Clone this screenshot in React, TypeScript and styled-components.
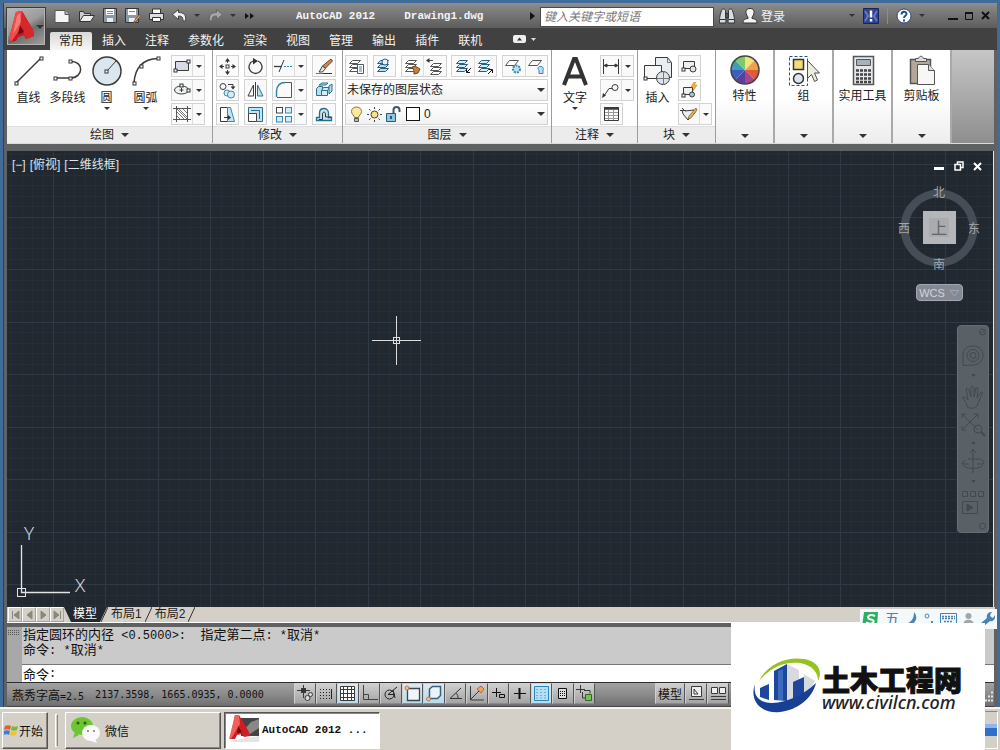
import React from "react";
import styled, { createGlobalStyle, css } from "styled-components";

const SANS = `"Liberation Sans", "Noto Sans CJK SC", sans-serif`;
const MONO = `"Liberation Mono", "Noto Sans CJK SC", monospace`;

const Global = createGlobalStyle`
  * { box-sizing: border-box; }
  body { margin: 0; background: #3f6c9b; font-family: ${SANS}; font-size: 12px; color: #222; }
  button, input, select { font: inherit; color: inherit; margin: 0; padding: 0; border: 0; background: none; border-radius: 0; outline: none; }
  button { display: inline-flex; align-items: center; justify-content: center; cursor: pointer; white-space: nowrap; }
  svg { display: block; flex: none; }
`;

/* ---------- shell ---------- */
const Desktop = styled.div`
  position: relative;
  min-height: 100vh;
  display: flex;
  flex-direction: column;
  overflow: hidden;
`;
const Frame = styled.main`
  flex: 1;
  display: flex;
  flex-direction: column;
  margin: 3px 3px 0;
  background: #5f6163;
  border-left: 1px solid #2c4258;
`;
const Body = styled.div`
  flex: 1;
  display: flex;
  flex-direction: column;
  margin: 0 3px;
`;

/* ---------- header ---------- */
const Header = styled.header`
  display: grid;
  grid-template-columns: 42px 1fr;
  height: 47px;
  background: linear-gradient(#8f8f8f 0, #7c7c7c 8px, #5d5d5d 25px, #414141 25px);
  padding-left: 2px;
`;
const AppButton = styled.button`
  width: 40px;
  height: 39px;
  margin-top: 4px;
  border: 1px solid #3c3c3c;
  box-shadow: inset 0 0 0 1px #b4b4b4;
  background: linear-gradient(150deg, #b9b9b9, #9c9c9c 45%, #6e6e6e 60%, #a2a2a2);
`;
const HeaderRows = styled.div`
  display: flex;
  flex-direction: column;
`;
const TitleBar = styled.div`
  display: flex;
  align-items: center;
  height: 25px;
  padding-left: 2px;
  padding-right: 3px;
  color: #f4f4f4;
`;
const IconButton = styled.button<{ $w: number }>`
  width: ${(p) => p.$w}px;
  height: 22px;
  flex: none;
`;
const Title = styled.h1`
  display: flex;
  gap: 29px;
  flex: none;
  width: 229px;
  margin: 0 0 0 38px;
  font: bold 11px ${MONO};
  white-space: nowrap;
`;
const Search = styled.input`
  flex: 1 1 174px;
  max-width: 174px;
  min-width: 80px;
  height: 20px;
  margin-top: 2px;
  padding-left: 3px;
  background: #fff;
  border: 1px solid #4a4a4a;
  &::placeholder { color: #777; font-style: italic; opacity: 1; }
`;
const Spacer = styled.span`
  flex: 1;
`;
const Divider = styled.span`
  width: 1px;
  height: 16px;
  background: #8d8d8d;
  margin: 0 5px 0 7px;
`;
const WindowControls = styled.div`
  display: flex;
  margin-left: 15px;
`;
const Tabs = styled.nav`
  display: flex;
  align-items: flex-end;
  gap: 1px;
  height: 22px;
  padding-left: 2px;
`;
const Tab = styled.button<{ $on?: boolean }>`
  height: 18px;
  padding: 0 9px;
  line-height: 18px;
  color: ${(p) => (p.$on ? "#222" : "#f2f2f2")};
  background: ${(p) => (p.$on ? "linear-gradient(#d9d9d9, #f6f6f6)" : "none")};
  border-radius: 2px 2px 0 0;
`;

/* ---------- ribbon ---------- */
const Ribbon = styled.section`
  display: flex;
  height: 94px;
  background: linear-gradient(#c6c6c6, #8e8e8e);
  border-bottom: 1px solid #dcdcd4;
`;
const PanelBox = styled.section`
  display: flex;
  flex-direction: column;
  border-right: 1px solid #9c9c9c;
  background: #fff;
  flex: none;
`;
const PanelBody = styled.div<{ $l: number; $r: number }>`
  flex: 1;
  display: flex;
  align-items: flex-start;
  padding: 5px ${(p) => p.$r}px 0 ${(p) => p.$l}px;
`;
const PanelTitle = styled.button`
  height: 17px;
  gap: 7px;
  background: #ececec;
  border-top: 1px solid #dedede;
  line-height: 16px;
`;
const Large = styled.button<{ $w: number }>`
  width: ${(p) => p.$w}px;
  flex: none;
  flex-direction: column;
  line-height: 18px;
  & > svg:first-child { margin-bottom: 2px; }
`;
const Rows = styled.div<{ $ml?: number }>`
  display: flex;
  flex-direction: column;
  gap: 2px;
  margin-left: ${(p) => p.$ml ?? 0}px;
`;
const ModifyGrid = styled.div`
  display: grid;
  grid-template-columns: 23px 23px 35px 24px;
  gap: 2px 5px;
`;
const Cell = styled.div<{ $w: number }>`
  display: flex;
  width: ${(p) => p.$w}px;
  height: 22px;
  border: 1px solid #d2d2d2;
  background: #fafafa;
`;
const Small = styled.button`
  flex: 1;
  height: 20px;
  & + & { border-left: 1px solid #dcdcdc; }
`;
const Drop = styled.button`
  width: 12px;
  height: 20px;
  border-left: 1px solid #dcdcdc;
`;
const LayerCol = styled.div`
  display: flex;
  flex-direction: column;
  gap: 2px;
  width: 203px;
`;
const LayerTools = styled.div`
  display: flex;
  justify-content: space-between;
`;
const Combo = styled.label`
  display: flex;
  align-items: center;
  height: 22px;
  padding: 0 2px 0 1px;
  border: 1px solid #d2d2d2;
  background: linear-gradient(#fff, #f1f1f1);
  select { flex: 1; min-width: 0; appearance: none; height: 20px; }
`;
const LayerMarks = styled.span`
  display: flex;
  align-items: center;
  gap: 2px;
  padding-left: 3px;
`;
const Swatch = styled.span`
  width: 14px;
  height: 14px;
  margin: 0 4px 0 2px;
  background: #fff;
  border: 1px solid #111;
`;
const Wide = styled.button`
  width: 59px;
  flex: none;
  flex-direction: column;
  justify-content: flex-start;
  padding: 5px 0 5px;
  line-height: 18px;
  background: linear-gradient(#fff 50%, #ededed);
  border-right: 2px solid #a9a9a9;
  & > svg:last-child { margin-top: auto; }
`;

/* ---------- drawing area ---------- */
const Canvas = styled.section`
  position: relative;
  flex: 1;
  min-height: 300px;
  margin-top: 7px;
  background: #212830;
  border-right: 1px solid #e8e4dc;
  overflow: hidden;
`;
const GridSvg = styled.svg`
  position: absolute;
  inset: 0;
  width: 100%;
  height: 100%;
`;
const ViewLabel = styled.div`
  position: absolute;
  left: 5px;
  top: 5px;
  display: flex;
  gap: 4px;
  color: #dfe2e6;
  line-height: 18px;
`;
const WinButtons = styled.div`
  position: absolute;
  right: 6px;
  top: 4px;
  display: flex;
`;
const Cursor = styled.svg`
  position: absolute;
  left: 365px;
  top: 165px;
`;
const Ucs = styled.svg`
  position: absolute;
  left: 4px;
  bottom: 6px;
`;
const CubeWrap = styled.div`
  position: absolute;
  right: 12px;
  top: 32px;
  display: flex;
  flex-direction: column;
  align-items: center;
`;
const Wcs = styled.button`
  width: 47px;
  height: 17px;
  margin-top: 9px;
  gap: 5px;
  border-radius: 4px;
  border: 1px solid #a4a7b2;
  background: #858996;
  color: #d2d4da;
  font-size: 11px;
`;
const NavBar = styled.div`
  position: absolute;
  right: 4px;
  top: 174px;
  width: 32px;
  height: 208px;
  border-radius: 4px;
  background: #5a6166;
  border: 1px solid #656c72;
`;

/* ---------- layout tabs ---------- */
const LayoutTabs = styled.div`
  display: flex;
  height: 16px;
  background: #d4d0c8;
  border-bottom: 1px solid #fff;
  padding-left: 1px;
  margin-right: -1px;
`;
const StepButton = styled.button`
  width: 14px;
  height: 15px;
  border: 1px solid #a6a39c;
  border-top-color: #fff;
  border-left-color: #fff;
`;
const SheetTab = styled.button<{ $on?: boolean }>`
  height: 15px;
  line-height: 15px;
  padding: 0 3px;
  ${(p) =>
    p.$on &&
    css`
      padding: 0 10px 0 9px;
      margin-right: -6px;
      color: #fff;
      background: #212830;
      clip-path: polygon(0 0, 100% 0, 36px 100%, 7px 100%);
    `}
`;

/* ---------- command window ---------- */
const Command = styled.section`
  display: grid;
  grid-template-columns: 15px 1fr;
  margin-top: 4px;
  border-bottom: 1px solid #2e2e2e;
  background: #a8a8a8;
`;
const Grip = styled.div`
  padding: 3px 1px;
`;
const History = styled.div`
  height: 38px;
  padding: 0 0 0 1px;
  background: #cacaca;
  border-bottom: 1px solid #777;
  color: #111;
  p { margin: 0; height: 15px; font-size: 13px; line-height: 15px; white-space: pre; }
  code { font: 12px/15px ${MONO}; }
`;
const Prompt = styled.label`
  display: flex;
  align-items: center;
  height: 17px;
  padding-left: 1px;
  background: #fff;
  font-size: 13px;
  color: #111;
  code, input { font: 12px ${MONO}; }
  input { flex: 1; }
`;

/* ---------- status bar ---------- */
const Status = styled.footer`
  display: flex;
  height: 24px;
  background: linear-gradient(#a2a2a2, #8b8b8b 50%, #6f6f6f);
  border-bottom: 1px solid #444;
`;
const Coords = styled.div`
  width: 287px;
  display: flex;
  align-items: center;
  gap: 11px;
  padding-left: 5px;
  color: #111;
  white-space: pre;
  code { font: 10px "DejaVu Sans Mono", monospace; }
`;
const Toggles = styled.div`
  display: flex;
  width: 301px;
  button { flex: 1; }
`;
const Toggle = styled.button<{ $on?: boolean; $w?: number }>`
  ${(p) => p.$w && `width: ${p.$w}px;`}
  height: 21px;
  border: 1px solid #d0d0d0;
  border-right-color: #555;
  border-bottom-color: #8a8a8a;
  background: ${(p) => (p.$on ? "linear-gradient(#dfe8ee, #b9dbe9)" : "linear-gradient(#cfcfcf, #a4a4a4)")};
  color: #111;
`;
const StatusGap = styled.span`
  width: 60px;
`;

/* ---------- taskbar ---------- */
const Taskbar = styled.footer`
  display: flex;
  align-items: center;
  gap: 3px;
  height: 43px;
  padding: 1px 2px 0;
  background: #d4d0c8;
  border-top: 2px solid #f6f5f2;
`;
const TaskButton = styled.button<{ $w: number; $on?: boolean }>`
  width: ${(p) => p.$w}px;
  height: 37px;
  justify-content: flex-start;
  gap: ${(p) => (p.$w < 60 ? 1 : 3)}px;
  padding-left: ${(p) => (p.$w < 60 ? 1 : 4)}px;
  border: 1px solid;
  border-color: ${(p) => (p.$on ? "#555 #fff #fff #555" : "#fff #555 #555 #fff")};
  box-shadow: inset ${(p) => (p.$on ? "1px 1px" : "-1px -1px")} 0 #8a877f;
  background: ${(p) => (p.$on ? "#fff" : "#d4d0c8")};
  color: #111;
  ${(p) => p.$on && `font: bold 11px ${MONO};`}
`;
const TaskDivider = styled.span`
  width: 3px;
  height: 33px;
  margin: 0 4px;
  border: 1px solid #fff;
  border-right-color: #8a877f;
`;
const Tray = styled.div`
  width: 60px;
  height: 38px;
  margin-left: auto;
  display: flex;
  align-items: center;
  justify-content: flex-end;
  border: 1px solid #fff;
  border-top-color: #8a877f;
`;

/* ---------- overlays ---------- */
const Ime = styled.div`
  position: absolute;
  right: 3px;
  bottom: 121px;
  display: flex;
  align-items: center;
  justify-content: space-between;
  width: 137px;
  height: 20px;
  padding: 0 2px;
  background: #f3f8fb;
  color: #4783b5;
  font-size: 15px;
  line-height: 18px;
`;
const Banner = styled.aside`
  position: absolute;
  right: 15px;
  bottom: 0;
  width: 254px;
  height: 127px;
  display: flex;
  align-items: flex-start;
  padding: 34px 0 0 22px;
  background: #fff;
  color: #111;
`;
const Brand = styled.div`
  margin: 8px 0 0 1px;
  strong {
    display: block;
    font: 900 28px/28px "Noto Sans CJK SC", sans-serif;
    -webkit-text-stroke: 1px #111;
    white-space: nowrap;
  }
  a {
    display: block;
    color: #222;
    text-decoration: none;
    font: italic 500 18px/18px "Noto Sans", sans-serif;
  }
`;

/* ---------- icons ---------- */
type IcoProps = { w?: number; h?: number; vb?: string; c?: string; children: React.ReactNode };
const Ico = ({ w = 16, h = w, vb, c = "#3a3a3a", children }: IcoProps) => (
  <svg width={w} height={h} viewBox={vb ?? `0 0 ${w} ${h}`} fill="none" stroke={c} aria-hidden="true">
    {children}
  </svg>
);
const Caret = ({ c = "#333", w = 8 }: { c?: string; w?: number }) => (
  <svg width={w} height={w / 2} viewBox="0 0 8 4" aria-hidden="true">
    <path d="M0 0h8L4 4z" fill={c} />
  </svg>
);
const Node = ({ x, y }: { x: number; y: number }) => (
  <rect x={x - 1.5} y={y - 1.5} width="3" height="3" fill="#fff" stroke="#333" />
);

const LogoA = () => (
  <svg width="28" height="33" viewBox="0 0 28 33" aria-hidden="true">
    <path d="M8 2l6-1 11 19 1 6-8 3-2-4-6 2-2 4-6 1-1-3z" fill="#c4161c" />
    <path d="M8 2l6-1 2 13-13 18-2-3z" fill="#ee4b4b" />
    <path d="M14 1l11 19 1 6-8 3-6-15z" fill="#d8262b" />
    <path d="M12 15l4 7-6 2z" fill="#6d0a0e" />
    <path d="M9 6l3-3 1 9-8 12z" fill="#ff8f8a" opacity=".7" />
  </svg>
);

const Layers = ({ c = "#fff" }: { c?: string }) => (
  <g fill={c}>
    <path d="M4.500 10.500h8l-3 3h-8z" />
    <path d="M4.500 6.500h8l-3 3h-8z" />
    <path d="M4.500 2.500h8l-3 3h-8z" />
  </g>
);

const I = {
  newDoc: (
    <Ico w={16} h={14} c="#555"><path d="M1 1.500h10l4 4v8H1z" fill="#f5f5f5" /><path d="M11 1.500v4h4" fill="#bbb" /></Ico>
  ),
  open: (
    <Ico w={17} h={14} c="#333"><path d="M1.500 12.500v-10h4l1 2h6v3" fill="#ccc" /><path d="M1.500 12.500l4-6h11l-4 6z" fill="#eee" /></Ico>
  ),
  save: (
    <Ico w={14} h={15} c="#333"><path d="M.5.500h13v14H.5z" fill="#8b98a5" /><path d="M3 1h8v6H3z" fill="#fff" stroke="none" /><path d="M4 3.500h6M4 5.500h6" stroke="#889" /><path d="M4 10h6v4H4z" fill="#eee" stroke="none" /></Ico>
  ),
  saveAs: (
    <Ico w={16} h={15} c="#333"><path d="M.5.500h13v14H.5z" fill="#8b98a5" /><path d="M3 1h8v6H3z" fill="#fff" stroke="none" /><path d="M4 3.500h6" stroke="#889" /><path d="M4 10h6v4H4z" fill="#eee" stroke="none" /><path d="M14.500 6.500l-5 6-1 2 2-.5 5-6z" fill="#f1b04c" stroke="#754" /></Ico>
  ),
  print: (
    <Ico w={17} h={15} c="#333"><path d="M4.500 6v-5h8v5" fill="#fff" /><path d="M1.500 5.500h14v6h-14z" fill="#ddd" /><path d="M4.500 9.500h8v4h-8z" fill="#fff" /></Ico>
  ),
  undo: (
    <Ico w={15} h={13} c="#444"><path d="M.5 5.500l6-5v3c5 0 8 2 7 8.500h-2.500c0-4-1-5-4.500-5v3.500z" fill="#f2f2f2" /></Ico>
  ),
  redo: (
    <Ico w={15} h={13} c="#666"><path d="M14.500 5.500l-6-5v3c-5 0-8 2-7 8.500H4c0-4 1-5 4.500-5v3.500z" fill="#a5a5a5" /></Ico>
  ),
  more: (
    <Ico w={9} h={6} c="none"><path d="M0 0l4 3-4 3zM5 0l4 3-4 3z" fill="#111" /></Ico>
  ),
  binoculars: (
    <Ico w={16} h={16} c="#333"><path d="M2.500 2.500c0-2 4-2 4 0l.5 12.500H.500c0-5 0-6 2-12.500zM9.500 2.500c0-2 4-2 4 0 2 6.500 2 7.500 2 12.500H9z" fill="#d8dde2" /><path d="M6.500 5.500h3v4h-3z" fill="#555" /><path d="M1 11.500h5.500M9.500 11.500H15" /></Ico>
  ),
  person: (
    <Ico w={16} h={16} c="#333"><path d="M8 .500c4 0 4 3 4 4s-1 4-2 4.500v1.500c4 .5 5 2 5 4.500H1c0-2.500 1-4 5-4.500V9C5 8.500 4 5.500 4 4.500s0-4 4-4z" fill="#f4f4f4" /></Ico>
  ),
  exchange: (
    <Ico w={16} h={16} c="#17245a"><path d="M.500.500h15v15H.500z" fill="#2f418f" /><path d="M2 3l3 5-3 5M14 3l-3 5 3 5" stroke="#6478c4" strokeWidth="2" /><path d="M8 2.500v7M8 11v2.500" stroke="#fff" strokeWidth="2.500" /></Ico>
  ),
  help: (
    <Ico w={16} h={16} c="#2a4a78"><circle cx="8" cy="8" r="7" fill="#fff" /><path d="M5.500 6.500c0-3.500 5-3.500 5-.5 0 2-2.500 1.500-2.500 4M8 11.500v2" strokeWidth="2" stroke="#264f86" /></Ico>
  ),
  line: (
    <Ico w={32}><path d="M3 28L28 3" strokeWidth="1.500" /><Node x={3.5} y={28.5} /><Node x={28.5} y={3.5} /></Ico>
  ),
  polyline: (
    <Ico w={32}><path d="M3 23h15c14 0 14-17 1-16.500" strokeWidth="1.500" /><Node x={3.5} y={23.5} /><Node x={18.5} y={23.5} /><Node x={18.5} y={6.5} /></Ico>
  ),
  circle: (
    <Ico w={32}><circle cx="16" cy="16" r="14" fill="#dce6ef" strokeWidth="1.500" /><path d="M16 16l9-10" /><Node x={15.5} y={16.5} /></Ico>
  ),
  arc: (
    <Ico w={32}><path d="M4 28C5 13 13 4 28 3.500" strokeWidth="1.500" /><Node x={4.5} y={28.5} /><Node x={11.5} y={11.5} /><Node x={28.5} y={3.5} /></Ico>
  ),
  rect: (
    <Ico w={18} h={14}><path d="M2.500 2.500h13v9h-13z" fill="#d5dce5" /><Node x={2.5} y={11.5} /><Node x={15.5} y={2.5} /></Ico>
  ),
  ellipse: (
    <Ico w={18} h={14}><ellipse cx="8.500" cy="7" rx="7" ry="4" fill="#eef2f5" /><path d="M6.500 7h4M8.500 5v4" /><Node x={15.5} y={7.5} /><Node x={8.5} y={2.5} /></Ico>
  ),
  hatch: (
    <Ico w={18} h={16}><path d="M3.500 0v16M14.500 0v16M0 2.500h18M0 13.500h18" stroke="#555" /><path d="M4 6l7 7M4 10l3 3M6 3l8 8M10 3l4 4M4 3l10 10" stroke="#777" /></Ico>
  ),
  move: (
    <Ico w={17}><path d="M8.500 2v13M2 8.500h13" strokeDasharray="3 2" /><path d="M8.500 0L6 3.500h5zM8.500 17L6 13.500h5zM0 8.500L3.500 6v5zM17 8.500L13.500 6v5z" fill="#333" stroke="none" /><rect x="7" y="7" width="3" height="3" fill="#fff" /></Ico>
  ),
  rotate: (
    <Ico w={17}><path d="M6 3a6.500 6.500 0 1 0 5 0" strokeWidth="1.300" /><path d="M6 0l5 3-5 3.500z" fill="#333" stroke="none" /></Ico>
  ),
  trim: (
    <Ico w={20} h={14}><path d="M0 7.500h8" strokeWidth="1.300" /><path d="M5 13L10 1" /><path d="M10 7.500h9" stroke="#3a86ad" strokeDasharray="2 1" /></Ico>
  ),
  erase: (
    <Ico w={18} h={17}><path d="M16 1l1.500 2-7 7-3-2z" fill="#c98a54" stroke="#6b4423" /><path d="M7.500 8l3 2.500-3 3.500H4z" fill="#e8e0d2" stroke="#444" /><path d="M1 15.500h7" stroke="#3a86ad" /><path d="M8 15.500h9" stroke="#333" /></Ico>
  ),
  copy: (
    <Ico w={17}><circle cx="4" cy="4.500" r="3" /><circle cx="8" cy="11" r="3" fill="#d5ecf5" stroke="#3a86ad" /><circle cx="12" cy="12.500" r="3.500" fill="#d5ecf5" stroke="#3a86ad" /><path d="M9 2.500h5V5" /><path d="M11.500 4.500h5L14 7.500z" fill="#333" stroke="none" /></Ico>
  ),
  mirror: (
    <Ico w={17}><path d="M8.500 0v17" /><path d="M6.500 3v11H1z" /><path d="M10.500 3v11H16z" fill="#b9dfee" stroke="#2d7498" /></Ico>
  ),
  fillet: (
    <Ico w={18}><path d="M1.500 16V10C2 5 5 1.500 10 1.500" stroke="#3a86ad" strokeWidth="1.500" /><path d="M10 1.500h6.500V16.500H2" stroke="#555" /></Ico>
  ),
  explode: (
    <Ico w={18} h={16} c="#256f93"><path d="M1.500 6.500l2-2h4v9h-6z" fill="#b9dfee" /><path d="M6.500 8.500h6v5h-6zM6.500 8.500l2-3h6l-2 3" fill="#d5ecf5" /><path d="M14 4l3-2v7l-3 3zM4 3l3-2h6l-2 2z" fill="#b9dfee" /></Ico>
  ),
  stretch: (
    <Ico w={17}><path d="M1.500 1.500h7v14h-7z" fill="#fff" /><path d="M8.500 1.500h3l4 14h-7z" fill="#c4e4f1" stroke="#3a86ad" /><path d="M5 11.500h6" /><path d="M9 9l3 2.500L9 14z" fill="#333" stroke="none" /></Ico>
  ),
  scale: (
    <Ico w={17} c="#256f93"><path d="M1.500 1.500h14v14h-6v-8h-8z" fill="#c4e4f1" /><path d="M1.500 7.500h8v8h-8z" fill="#fff" stroke="#444" /><path d="M4 4.500h8.500V13" /></Ico>
  ),
  array: (
    <Ico w={18} h={17} c="#444"><rect x="1.500" y="1.500" width="6" height="5.500" fill="#fff" /><rect x="10.500" y="1.500" width="6" height="5.500" fill="#d5ecf5" stroke="#3a86ad" /><rect x="1.500" y="10.500" width="6" height="5.500" fill="#d5ecf5" stroke="#3a86ad" /><rect x="10.500" y="10.500" width="6" height="5.500" fill="#d5ecf5" stroke="#3a86ad" /></Ico>
  ),
  offset: (
    <Ico w={18} h={15} c="#256f93"><path d="M1.500 13.500h15v-3h-3V6c0-6-9-6-9 0v4.500h-3z" fill="#c4e4f1" strokeWidth="1.300" /><path d="M4 12.500h3.500V7c0-2.500 3-2.500 3 0v3h6" stroke="#333" /></Ico>
  ),
  layerProps: (
    <Ico w={17} c="#555"><Layers /><path d="M9.500 6.500h6v9h-6z" fill="#fff" /><path d="M11 9h3M11 11h3M11 13h3" stroke="#3a86ad" /></Ico>
  ),
  layerCurrent: (
    <Ico w={17} c="#285f7e"><Layers c="#b9dfee" /><circle cx="9" cy="4" r="3" fill="#eaf5fa" /></Ico>
  ),
  layerMatch: (
    <Ico w={17} c="#555"><Layers /><path d="M8 9l3-1 5 3-2 4-4 1c0-3 0-4-2-7z" fill="#c9813e" stroke="#6b4423" /></Ico>
  ),
  layerPrev: (
    <Ico w={17} c="#555"><g transform="translate(3 3)"><Layers /></g><path d="M7 2.500H1" /><path d="M0 2.500L3.500 0v5z" fill="#333" stroke="none" /></Ico>
  ),
  layerIso: (
    <Ico w={17} c="#285f7e"><Layers c="#d5ecf5" /><path d="M16 10l-4 4M11.500 11v3.500H15" stroke="#111" /></Ico>
  ),
  layerUniso: (
    <Ico w={17} c="#285f7e"><Layers c="#d5ecf5" /><path d="M11 16l4-4M12 11.500h3.500V15" stroke="#111" /></Ico>
  ),
  layerFreeze: (
    <Ico w={17} c="#555"><path d="M4.500 2.500h9l-4 5h-9z" fill="#fff" /><circle cx="11.500" cy="11" r="3.500" fill="#b9dfee" stroke="#3a86ad" strokeDasharray="2 1" strokeWidth="2" /></Ico>
  ),
  layerOff: (
    <Ico w={17} c="#555"><path d="M4.500 2.500h9l-4 5h-9z" fill="#fff" /><path d="M11 12.500c-4-5 6-6 4 0v3h-4z" fill="#b9dfee" stroke="#3a86ad" /></Ico>
  ),
  bulb: (
    <Ico w={14} h={17} c="#8a7438"><path d="M4.500 11.500c0-2-3-3-3-6 0-6 10-6 10 0 0 3-3 4-3 6z" fill="#fbe9a0" /><path d="M4.500 12.500h4v3h-4z" fill="#bbb" stroke="#555" /></Ico>
  ),
  sun: (
    <Ico w={17} c="#444"><circle cx="8.500" cy="8.500" r="3.500" fill="#fbe28a" /><path d="M8.500 1v2M8.500 14v2M1 8.500h2M14 8.500h2M3 3l1.500 1.500M12.500 12.500L14 14M3 14l1.500-1.500M12.500 4.500L14 3" /></Ico>
  ),
  lock: (
    <Ico w={17} c="#1f5d80"><path d="M1.500 7.500h9v8h-9z" fill="#8fc7e0" /><path d="M8.500 7V4c0-4 6-4 6 0v2" strokeWidth="2" stroke="#456" /><path d="M6 10v3" strokeWidth="2" /></Ico>
  ),
  bigA: (
    <Ico w={32} c="#333"><path d="M5 30L15 4h2l10 26M9 21.500h14" strokeWidth="4" /></Ico>
  ),
  dim: (
    <Ico w={18} h={15}><path d="M1.500 0v15M16.500 0v15M3 6.500h12" /><path d="M2 6.500L5 5v3zM16 6.500L13 5v3z" fill="#333" /></Ico>
  ),
  leader: (
    <Ico w={18} h={15}><path d="M2 13L7 5.500h3" /><circle cx="13" cy="4.500" r="3" /><path d="M0 15l1-5 3 2.500z" fill="#333" stroke="none" /></Ico>
  ),
  table: (
    <Ico w={17} h={16}><path d="M1.500 1.500h14v13h-14z" fill="#fff" /><path d="M1 2.500h15" strokeWidth="2.500" /><path d="M2 6.500h13M2 9.500h13M2 12.500h13M5.500 4v10M10.500 4v10" stroke="#999" /></Ico>
  ),
  insert: (
    <Ico w={32}><path d="M13.500 2.500h12l4 5v15h-16z" fill="#e9edf1" /><path d="M2.500 10.500h17v13h-17z" fill="#f6f7f8" /><circle cx="21" cy="23" r="6.500" fill="#dfe4e9" /><path d="M14.500 23.500H28M21.500 16v14M25.500 2.500v5h4" stroke="#777" /><Node x={3.5} y={23.5} /></Ico>
  ),
  block: (
    <Ico w={17} h={14}><path d="M2.500 2.500h11v7h-11z" fill="#eef1f4" /><circle cx="12" cy="10" r="3" fill="#dfe4e9" /><Node x={2.5} y={10.5} /></Ico>
  ),
  blockEdit: (
    <Ico w={17} h={16}><path d="M2.500 5.500h9v7h-9z" fill="#eef1f4" /><circle cx="11" cy="12.500" r="2.500" fill="#9ccbe0" /><Node x={2.5} y={13.5} /><path d="M13 0l-3 5h3l-1 4 4-6h-3l2-3z" fill="#f6b73c" stroke="#b87812" strokeWidth=".5" /></Ico>
  ),
  attr: (
    <Ico w={18} h={16}><path d="M2 2l3 3 9-1 1 3-7 7-5-6-1-4" fill="#eee" /><path d="M16 2l-7 8-1 3 3-1 6-8z" fill="#f1b04c" stroke="#754" strokeWidth=".7" /><path d="M0 4.500h6" /></Ico>
  ),
  group: (
    <Ico w={32} c="#333"><path d="M1.500 1.500h18v29h-18z" stroke="#234f8a" strokeDasharray="3 2" /><path d="M5.500 4.500h10v10h-10z" fill="#f0dc78" strokeWidth="1.500" /><circle cx="10.500" cy="23.500" r="5" fill="#dfe4f0" strokeWidth="1.500" /><path d="M19.500 5.500v18l4-4 3 7 3-1.500-3-7h5z" fill="#e9efdc" stroke="#455" /></Ico>
  ),
  calc: (
    <Ico w={32} c="#555"><path d="M6.500 1.500h20v28h-20z" fill="#e5e7e9" strokeWidth="1.500" /><path d="M9.500 4.500h14v6h-14z" fill="#a8b0ba" /><path d="M9 15.500h15M9 19.500h15M9 23.500h15M9 27h15" stroke="#444" strokeWidth="2.500" strokeDasharray="3 1" /></Ico>
  ),
  clip: (
    <Ico w={32} c="#555"><path d="M4.500 4.500h20v24h-20z" fill="#b3a898" strokeWidth="1.500" /><path d="M9.500 6.500v-3h3c1-3 4-3 5 0h3v3z" fill="#ddd" /><path d="M11.500 9.500h11l6 6v14h-17z" fill="#f7f7f7" /><path d="M22.500 9.500v6h6" fill="#ddd" /></Ico>
  ),
};

const WHEEL = ["#f3e37a", "#f0a04a", "#dd5a3c", "#a8458a", "#5b3fa0", "#3a5fc0", "#3f9fb0", "#7cc86a"];
const Wheel = () => (
  <Ico w={32} c="none">
    {WHEEL.map((c, i) => {
      const a = ((i * 45 - 90) * Math.PI) / 180;
      const b = (((i + 1) * 45 - 90) * Math.PI) / 180;
      return <path key={c} fill={c} d={`M16 15L${16 + 14 * Math.cos(a)} ${15 + 14 * Math.sin(a)}A14 14 0 0 1 ${16 + 14 * Math.cos(b)} ${15 + 14 * Math.sin(b)}z`} />;
    })}
    <circle cx="16" cy="15" r="14" stroke="#444" strokeWidth="1.500" />
  </Ico>
);

const MINOR = [11, 21, 32, 42, 63, 74, 84, 95];

const Grid = () => (
  <GridSvg aria-hidden="true">
    <defs>
      <pattern id="cad-grid" width="105" height="105" x="46" y="13" patternUnits="userSpaceOnUse">
        {MINOR.map((n) => (
          <path key={n} d={`M${n} 0h1v105h-1zM0 ${n}h105v1H0z`} fill="#262d37" />
        ))}
        <path d="M0 0h1v105H0zM52 0h1v105h-1zM0 0h105v1H0zM0 53h105v1H0z" fill="#303946" />
      </pattern>
    </defs>
    <rect width="100%" height="100%" fill="url(#cad-grid)" />
  </GridSvg>
);

const Tool = ({ name, icon, w = 23, drop }: { name: string; icon: React.ReactNode; w?: number; drop?: boolean }) => (
  <Cell $w={w}>
    <Small aria-label={name}>{icon}</Small>
    {drop && <Drop aria-label={`${name} 选项`}><Caret w={6} /></Drop>}
  </Cell>
);
const Pair = ({ a, b }: { a: [string, React.ReactNode]; b: [string, React.ReactNode] }) => (
  <Cell $w={46}>
    <Small aria-label={a[0]}>{a[1]}</Small>
    <Small aria-label={b[0]}>{b[1]}</Small>
  </Cell>
);
const LargeTool = ({ label, icon, w = 39, drop }: { label: string; icon: React.ReactNode; w?: number; drop?: boolean }) => (
  <Large $w={w}>
    {icon}
    {label}
    {drop && <Caret w={6} />}
  </Large>
);
const Panel = ({ title, l, r, children }: { title: string; l: number; r: number; children: React.ReactNode }) => (
  <PanelBox>
    <PanelBody $l={l} $r={r}>{children}</PanelBody>
    <PanelTitle>{title}<Caret /></PanelTitle>
  </PanelBox>
);

const QUICK: [string, React.ReactNode, number][] = [
  ["新建", I.newDoc, 24],
  ["打开", I.open, 24],
  ["保存", I.save, 23],
  ["另存为", I.saveAs, 23],
  ["打印", I.print, 24],
  ["放弃", I.undo, 22],
  ["放弃列表", <Caret key="u" w={6} />, 14],
  ["重做", I.redo, 22],
  ["重做列表", <Caret key="r" w={6} />, 14],
  ["更多", I.more, 18],
];
const TABS = ["常用", "插入", "注释", "参数化", "渲染", "视图", "管理", "输出", "插件", "联机"];

const TOGGLES: [string, React.ReactNode, boolean][] = [
  ["推断约束", <Ico key="1" w={17}><path d="M7.500 0v13M1 5.500h13" /><rect x="5.500" y="3.500" width="4" height="4" fill="#333" /><circle cx="11.500" cy="13" r="2.500" fill="#ddd" /><circle cx="14.500" cy="9.500" r="2" fill="#ddd" /></Ico>, false],
  ["捕捉", <Ico key="2" w={14} c="#222"><path d="M1 2.500h10M1 5.500h10M1 8.500h10M1 11.500h10" strokeDasharray="1 2" /><path d="M12.500 2v10" /></Ico>, false],
  ["栅格", <Ico key="3" w={17}><path d="M1.500 1.500h14v14h-14z" fill="#fff" /><path d="M1 4.500h15M1 8.500h15M1 12.500h15M4.500 1v15M8.500 1v15M12.500 1v15" /></Ico>, true],
  ["正交", <Ico key="4" w={17} c="#444"><path d="M2.500 0v14.500H17M2.500 9.500h5v5" /></Ico>, false],
  ["极轴", <Ico key="5" w={15} c="#222"><circle cx="6.500" cy="8.500" r="4.500" /><path d="M14 1L5 8.500h7M10 4l2 8" /></Ico>, false],
  ["对象捕捉", <Ico key="6" w={17} c="#444"><path d="M3.500 3.500h12v12h-12z" fill="#eef6fa" strokeWidth="1.300" /><circle cx="3" cy="3" r="2" fill="#f6c878" stroke="#a77" /></Ico>, true],
  ["三维捕捉", <Ico key="7" w={17} c="#3a5f78"><path d="M4.500 4l3-2.500h8v9l-3 3h-8z" fill="#eaf4f8" strokeWidth="1.500" /><circle cx="3.500" cy="14" r="2" fill="#f6c878" stroke="#a77" /></Ico>, true],
  ["对象追踪", <Ico key="8" w={15} c="#333"><path d="M13 2L2 12.500h12M8 7.500c2 1 2 3 2 5" /></Ico>, false],
  ["动态坐标", <Ico key="9" w={17}><path d="M2.500 1v14H16M3 14l9-9" /><path d="M9 4l4-3 3 3-3 4z" fill="#f1a93c" stroke="#a66" /></Ico>, false],
  ["动态输入", <Ico key="10" w={15} c="#111"><path d="M1 6.500h9M5.500 2v9M8.500 8.500h5v3h-5z" /></Ico>, false],
  ["线宽", <Ico key="11" w={15} c="#111"><path d="M2 7.500h12" /><path d="M7.500 2v11" strokeWidth="2" /></Ico>, false],
  ["透明度", <Ico key="12" w={17} c="#2c86b8"><path d="M1.500 1.500h14v14h-14z" fill="#b6dff2" /><path d="M3 4.500h11M3 7.500h11M3 10.500h11M3 13h11" strokeDasharray="2 2" stroke="#6bb4da" /></Ico>, true],
  ["快捷特性", <Ico key="13" w={13} c="#111"><path d="M2.500 1.500h8v10h-8z" fill="#ddd" /><path d="M4 4.500h5M4 6.500h5M4 8.500h5" strokeDasharray="1 1" /></Ico>, false],
  ["选择循环", <Ico key="14" w={17}><path d="M4.500 0v8M0 4.500h9M8 5.500h6v3M6.500 7v6h3" /><path d="M9.500 9.500h6v6h-6z" fill="#77c150" stroke="#2b6d1a" /></Ico>, false],
];

const Slash = () => (
  <Ico w={7} h={15} c="#333"><path d="M7 0L0 15" /></Ico>
);

export default function App() {
  return (
    <Desktop>
      <Global />
      <Frame>
        <Header>
          <AppButton aria-label="应用程序菜单"><LogoA /><Caret w={8} /></AppButton>
          <HeaderRows>
            <TitleBar>
              {QUICK.map(([n, icon, w]) => <IconButton key={n} aria-label={n} $w={w}>{icon}</IconButton>)}
              <Title><span>AutoCAD 2012</span><span>Drawing1.dwg</span></Title>
              <IconButton aria-label="展开搜索" $w={15}><Ico w={5} h={8} c="none"><path d="M0 0l5 4-5 4z" fill="#111" /></Ico></IconButton>
              <Search aria-label="搜索" placeholder="键入关键字或短语" />
              <IconButton aria-label="查找" $w={25}>{I.binoculars}</IconButton>
              <IconButton aria-label="用户" $w={22}>{I.person}</IconButton>
              <button>登录</button>
              <Spacer />
              <IconButton aria-label="登录选项" $w={20}><Caret w={6} /></IconButton>
              <IconButton aria-label="交换" $w={18}>{I.exchange}</IconButton>
              <Divider />
              <IconButton aria-label="帮助" $w={22}>{I.help}</IconButton>
              <IconButton aria-label="帮助选项" $w={14}><Caret w={6} /></IconButton>
              <WindowControls>
                <IconButton aria-label="最小化" $w={17}><Ico w={10} h={10} c="#111"><path d="M0 8h10" strokeWidth="2" /></Ico></IconButton>
                <IconButton aria-label="最大化" $w={16}><Ico w={8} h={8} c="#111"><path d="M.5 1.500h7v6h-7z" /><path d="M0 1h8" strokeWidth="2" /></Ico></IconButton>
                <IconButton aria-label="关闭" $w={17}><Ico w={9} h={9} c="#111"><path d="M1 1l7 7M8 1L1 8" strokeWidth="2" /></Ico></IconButton>
              </WindowControls>
            </TitleBar>
            <Tabs>
              {TABS.map((t, i) => <Tab key={t} $on={i === 0}>{t}</Tab>)}
              <IconButton aria-label="功能区显示" $w={54}>
                <Ico w={36} h={8} vb="-12 0 36 8" c="none"><rect width="13" height="8" rx="2" fill="#eee" /><path d="M4 5.500h5L6.500 2.500z" fill="#333" /><path d="M18 3h5l-2.500 3z" fill="#ddd" /></Ico>
              </IconButton>
            </Tabs>
          </HeaderRows>
        </Header>
        <Body>
          <Ribbon>
            <Panel title="绘图" l={2} r={7}>
              <LargeTool label="直线" icon={I.line} />
              <LargeTool label="多段线" icon={I.polyline} />
              <LargeTool label="圆" icon={I.circle} drop />
              <LargeTool label="圆弧" icon={I.arc} drop />
              <Rows $ml={6}>
                <Tool name="矩形" icon={I.rect} w={34} drop />
                <Tool name="椭圆" icon={I.ellipse} w={34} drop />
                <Tool name="图案填充" icon={I.hatch} w={34} drop />
              </Rows>
            </Panel>
            <Panel title="修改" l={3} r={6}>
              <ModifyGrid>
                <Tool name="移动" icon={I.move} />
                <Tool name="旋转" icon={I.rotate} />
                <Tool name="修剪" icon={I.trim} w={35} drop />
                <Tool name="删除" icon={I.erase} w={24} />
                <Tool name="复制" icon={I.copy} />
                <Tool name="镜像" icon={I.mirror} />
                <Tool name="圆角" icon={I.fillet} w={35} drop />
                <Tool name="分解" icon={I.explode} w={24} />
                <Tool name="拉伸" icon={I.stretch} />
                <Tool name="缩放" icon={I.scale} />
                <Tool name="阵列" icon={I.array} w={35} drop />
                <Tool name="偏移" icon={I.offset} w={24} />
              </ModifyGrid>
            </Panel>
            <Panel title="图层" l={2} r={3}>
              <LayerCol>
                <LayerTools>
                  <Tool name="图层特性" icon={I.layerProps} />
                  <Tool name="置为当前" icon={I.layerCurrent} />
                  <Pair a={["匹配", I.layerMatch]} b={["上一个", I.layerPrev]} />
                  <Pair a={["隔离", I.layerIso]} b={["取消隔离", I.layerUniso]} />
                  <Pair a={["冻结", I.layerFreeze]} b={["关闭图层", I.layerOff]} />
                </LayerTools>
                <Combo>
                  <select aria-label="图层状态"><option>未保存的图层状态</option></select>
                  <Caret />
                </Combo>
                <Combo>
                  <LayerMarks>{I.bulb}{I.sun}{I.lock}<Swatch /></LayerMarks>
                  <select aria-label="图层"><option>0</option></select>
                  <Caret />
                </Combo>
              </LayerCol>
            </Panel>
            <Panel title="注释" l={4} r={3}>
              <LargeTool label="文字" icon={I.bigA} w={38} drop />
              <Rows $ml={6}>
                <Tool name="线性" icon={I.dim} w={34} drop />
                <Tool name="引线" icon={I.leader} w={34} drop />
                <Tool name="表格" icon={I.table} />
              </Rows>
            </Panel>
            <Panel title="块" l={2} r={3}>
              <LargeTool label="插入" icon={I.insert} w={35} />
              <Rows $ml={3}>
                <Tool name="创建" icon={I.block} />
                <Tool name="编辑" icon={I.blockEdit} />
                <Tool name="编辑属性" icon={I.attr} w={34} drop />
              </Rows>
            </Panel>
            <Wide><Wheel />特性<Caret /></Wide>
            <Wide>{I.group}组<Caret /></Wide>
            <Wide>{I.calc}实用工具<Caret /></Wide>
            <Wide>{I.clip}剪贴板<Caret /></Wide>
          </Ribbon>

          <Canvas>
            <Grid />
            <ViewLabel><span>[−]</span><span>[俯视]</span><span>[二维线框]</span></ViewLabel>
            <WinButtons>
              <IconButton aria-label="最小化视口" $w={20}><Ico w={10} h={10} c="#fff"><path d="M0 7.500h10" strokeWidth="3" /></Ico></IconButton>
              <IconButton aria-label="还原视口" $w={19}><Ico w={10} h={10} c="#fff"><path d="M1 3.500h5.500V9H1zM3.500 3V1H9v5.500H7" strokeWidth="1.500" /></Ico></IconButton>
              <IconButton aria-label="关闭视口" $w={19}><Ico w={9} h={9} c="#fff"><path d="M1 1l7 7M8 1L1 8" strokeWidth="2" /></Ico></IconButton>
            </WinButtons>
            <Cursor width="49" height="49" stroke="#dcdcdc" fill="none" aria-hidden="true">
              <path d="M24.500 0v49M0 24.500h49" /><rect x="21.500" y="21.500" width="6" height="6" />
            </Cursor>
            <Ucs width="90" height="90" viewBox="-4 -14 90 90" stroke="#e4e4e4" fill="none" aria-hidden="true">
              <path d="M6.500 20v48M6 67.500h49" strokeWidth="1.300" /><rect x="2.500" y="63.500" width="8" height="8" />
              <g fill="#e4e4e4" stroke="none" fontFamily="Open Sans, sans-serif" fontWeight="300" fontSize="19">
                <text x="9" y="15">Y</text><text x="60" y="67">X</text>
              </g>
            </Ucs>
            <CubeWrap>
              <svg width="84" height="92" viewBox="0 0 84 92" aria-label="视图方位">
                <circle cx="42" cy="45" r="34.500" fill="none" stroke="#474d57" strokeWidth="8" />
                <rect x="26" y="28" width="33" height="33" fill="#b4b6b9" />
                <rect x="32" y="35" width="20" height="19" fill="#a9abae" />
                <g fill="#a3a5aa" fontSize="12" textAnchor="middle">
                  <text x="42" y="14">北</text><text x="42" y="86">南</text>
                  <text x="7" y="50">西</text><text x="77" y="50">东</text>
                  <text x="42" y="51" fontSize="16" fill="#666">上</text>
                </g>
              </svg>
              <Wcs>WCS<Ico w={9} h={8} c="#a2a6b2"><path d="M0 1.500h9L4.500 7z" /></Ico></Wcs>
            </CubeWrap>
            <NavBar>
              <Ico w={30} h={206} c="#42494f">
                <circle cx="24.500" cy="6" r="3" /><path d="M22 8l5-4" />
                <path d="M5 39.500V29c0-5 3-9 10-9 6 0 10 4 10 9s-4 10-10 10z" /><circle cx="15" cy="29.500" r="6" /><circle cx="15" cy="29.500" r="3" />
                <path d="M14 48.500h3l-1.500 2z" fill="#42494f" />
                <path d="M9 80C8 75 4 72 5 71c2-1 4 2 5 3L8 63c1-1 2-1 3 1l2 7V61c1-1 2-1 3 0v10l2-9c1-1 2 0 2 1l-1 9 4-6c1 0 2 0 1 2l-5 12c-2 3-9 3-10 0z" />
                <path d="M4 88l16 16M20 88L4 104M4 92v-4h4M16 88h4v4M4 100v4h4" /><circle cx="20" cy="103" r="4" /><path d="M23 106l4 4" strokeWidth="2" />
                <path d="M14 116.500h3l-1.500 2z" fill="#42494f" />
                <path d="M15 124v23M12 127l3-4 3 4M11 138h-7l3-4M19 138h6c3-3-2-5-5-5H10M5 139c2 4 17 5 20 0" />
                <path d="M14 154.500h3l-1.500 2z" fill="#42494f" />
                <path d="M4.500 165.500h5v5h-5zM12.500 165.500h5v5h-5zM20.500 165.500h5v5h-5zM4.500 175.500h15v12h-15z" /><path d="M9 178l6 3.500-6 3.500z" fill="#42494f" />
                <circle cx="24.500" cy="200" r="3" />
              </Ico>
            </NavBar>
          </Canvas>

          <LayoutTabs>
            {["M2.500 1v8M9 1v8L4 5z", "M8 1v8L3 5z", "M3 1v8l5-4z", "M8.500 1v8M2 1v8l5-4z"].map((d, i) => (
              <StepButton key={d} aria-label={["首个", "上一个", "下一个", "末个"][i]}>
                <Ico w={11} h={10} c="#8a877f"><path d={d} fill="#8a877f" /></Ico>
              </StepButton>
            ))}
            <SheetTab $on>模型</SheetTab>
            <Slash />
            <SheetTab>布局1</SheetTab>
            <Slash />
            <SheetTab>布局2</SheetTab>
            <Slash />
          </LayoutTabs>

          <Command>
            <Grip><Ico w={12} h={5} c="#555"><path d="M0 .500h12M0 2.500h12M0 4.500h12" strokeDasharray="1 1" /></Ico></Grip>
            <div>
              <History>
                <p>指定圆环的内径<code> &lt;0.5000&gt;:  </code>指定第二点<code>: *</code>取消<code>*</code></p>
                <p>命令<code>: *</code>取消<code>*</code></p>
              </History>
              <Prompt>命令<code>:</code><input aria-label="命令" /></Prompt>
            </div>
          </Command>

          <Status>
            <Coords><span>燕秀字高<code>=2.5</code></span><code>2137.3598, 1665.0935, 0.0000</code></Coords>
            <Toggles>
              {TOGGLES.map(([n, icon, on]) => <Toggle key={n} aria-label={n} $on={on}>{icon}</Toggle>)}
            </Toggles>
            <StatusGap />
            <Toggle $w={30}>模型</Toggle>
            <Toggle $w={22} aria-label="布局"><Ico w={17}><path d="M3.500 1.500h10v10h-10z" fill="#eee" /><path d="M6 4v5h4zM1 14.500h15" /></Ico></Toggle>
            <Toggle $w={22} aria-label="快速查看"><Ico w={17}><path d="M1.500 2.500h6v6h-6zM9.500 2.500h6v6h-6z" fill="#eee" /><path d="M1 11.500h15M1 14.500h15" /></Ico></Toggle>
            <Spacer />
            <Ico w={10} h={22} c="#e4e4e4"><path d="M7 9.500h2M4 13.500h5M1 17.500h8" strokeWidth="2" strokeDasharray="2 1" /></Ico>
          </Status>
        </Body>
      </Frame>

      <Taskbar>
        <TaskButton $w={46}>
          <Ico w={14} h={14} c="none"><path d="M1 3c2-1 4-1 6 0L6 7c-2-1-4-1-6 0z" fill="#e2612b" /><path d="M8 3c2 1 4 1 6 0l-1 4c-2 1-4 1-6 0z" fill="#7db63b" /><path d="M0 8c2-1 4-1 6 0l-1 4c-1-1-4-1-5 0z" fill="#3b7fd0" /><path d="M7 8c2 1 4 1 6 0l-1 4c-2 1-4 1-6 0z" fill="#f3c12c" /></Ico>
          <span>开始</span>
        </TaskButton>
        <TaskDivider />
        <TaskButton $w={156}>
          <Ico w={32} h={28} c="none"><ellipse cx="12" cy="10" rx="11" ry="9" fill="#6cc531" /><path d="M5 16l-2 6 6-3z" fill="#6cc531" /><ellipse cx="21" cy="17" rx="9" ry="8" fill="#fafafa" /><path d="M25 23l2 4-6-2z" fill="#fafafa" /><circle cx="8" cy="7" r="1.500" fill="#2c5e12" /><circle cx="15" cy="7" r="1.500" fill="#2c5e12" /><circle cx="18" cy="15" r="1" fill="#777" /><circle cx="24" cy="15" r="1" fill="#777" /></Ico>
          微信
        </TaskButton>
        <TaskButton $w={156} $on>
          <Ico w={30} h={30} c="none"><path d="M12 3h18v18H12z" fill="#444" /><path d="M14 16l8-9 8-3v9l-12 8z" fill="#888" /><path d="M0 26l30-5v6H4z" fill="#e5e5e5" /><path d="M6 0l4 0 10 17 1 4-6 1-2-3-5 1-2 4-5 0z" fill="#d01c22" /><path d="M6 0l4 0 1 9-9 15H0z" fill="#f0605c" /><path d="M9 11l4 6-5 1z" fill="#6d0a0e" /></Ico>
          AutoCAD 2012 ...
        </TaskButton>
        <Tray><Ico w={12} h={12} c="none"><path d="M0 0h12v12H0z" fill="#2f6fc8" /><path d="M0 0h12v4H0z" fill="#8fb6ec" /></Ico></Tray>
      </Taskbar>

      <Ime>
        <Ico w={17} h={17} c="none"><path d="M2 1h14l-1 15H0z" fill="#2fae63" /><path d="M13 5c-6-3-10 2-4 3.500 6 1.500 1 6-5 3" stroke="#fff" strokeWidth="2" /></Ico>
        <span>五</span>
        <Ico w={13} h={14} c="none"><path d="M9 0c6 7-1 15-9 12 6-1 9-5 9-12z" fill="#4783b5" /></Ico>
        <Ico w={10} h={13} c="#4783b5"><circle cx="3" cy="3" r="2" /><path d="M8 8v4" strokeWidth="2" /></Ico>
        <Ico w={17} h={12} c="#4783b5"><path d="M.500.500h16v11H.500z" /><path d="M2 3.500h13M2 5.500h13M4 8.500h9" strokeDasharray="2 1" strokeWidth="1.500" /></Ico>
        <Ico w={13} h={14} c="none"><circle cx="6.500" cy="4" r="3" fill="#a2a6aa" /><path d="M1 13c0-7 11-7 11 0z" fill="#a2a6aa" /></Ico>
        <Ico w={14} h={14} c="none"><path d="M0 11l6-5c-1-3 1-6 5-6L9 3l1 2 2 1 2-3c1 4-2 7-5 6l-6 5c-2 1-4-1-3-3z" fill="#4783b5" /></Ico>
      </Ime>

      <Banner>
        <svg width="68" height="58" viewBox="0 0 68 58" aria-hidden="true">
          <path d="M34 7l12 6v32l-12 2zM51 17l11 7-6 12-5 3z" fill="#d9dadd" />
          <path d="M21 14l13-7v37l-13-1zM40 25l11-5v20l-11 4zM7 31l9-4v16l-9-3z" fill="#1d479b" />
          <path d="M25 14l5-2v31h-5z" fill="#3c6bbd" />
          <path d="M6 24C14 7 34-1 51 2c14 2 19 12 14 22 0-9-6-16-18-18C30 4 16 12 6 24z" fill="#97c11f" />
          <path d="M2 27c-3 18 12 22 30 17 14-4 25-12 31-18-4 16-19 27-36 29C8 57-4 44 2 27z" fill="#173f94" />
        </svg>
        <Brand>
          <strong>土木工程网</strong>
          <a href="#home">www.civilcn.com</a>
        </Brand>
      </Banner>
    </Desktop>
  );
}
